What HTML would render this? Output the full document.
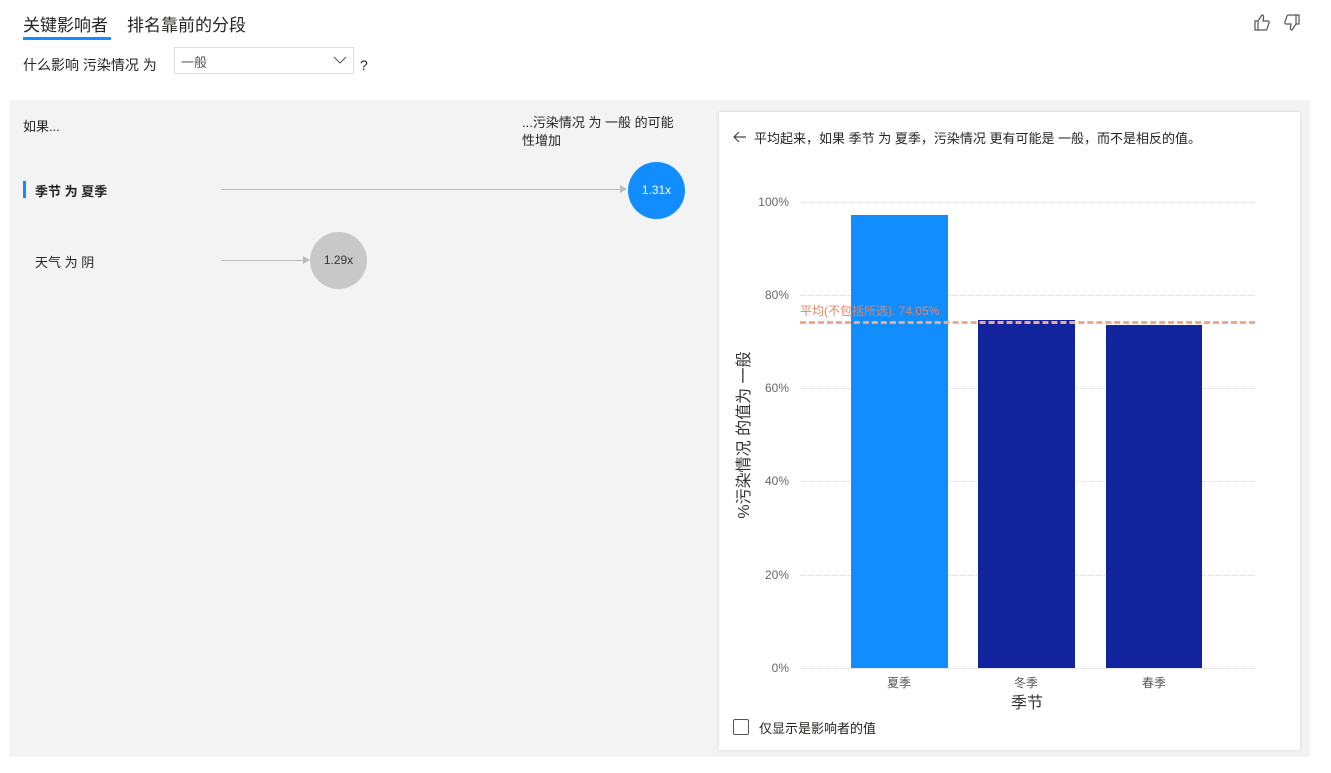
<!DOCTYPE html>
<html><head><meta charset="utf-8"><style>
body{margin:0;width:1331px;height:773px;background:#fff;font-family:"Liberation Sans","Noto Sans CJK SC",sans-serif;color:#252423;position:relative;overflow:hidden}
.a{position:absolute;white-space:nowrap}
.g{position:absolute;left:800px;width:455px;border-top:1px dotted #d8d8d8}
</style></head><body>
<div class="a" style="left:23px;top:11px;font-size:17px;color:#252423">关键影响者</div>
<div class="a" style="left:23px;top:37px;width:88px;height:3px;background:#118dff"></div>
<div class="a" style="left:127px;top:11px;font-size:17px;color:#252423">排名靠前的分段</div>
<svg class="a" style="left:1253px;top:13px" width="48" height="20" viewBox="0 0 48 20" fill="none" stroke="#555" stroke-width="1.2"><path d="M2 8h3v9H2zM5 8l4-6c1 0 2 1 1.5 3L10 8h5c1 0 1.5 1 1 2l-2 6c-.3.7-1 1-1.5 1H5"/><path d="M46 11h-3V2h3zM43 11l-4 6c-1 0-2-1-1.5-3L38 11h-5c-1 0-1.5-1-1-2l2-6c.3-.7 1-1 1.5-1H43"/></svg>
<div class="a" style="left:23px;top:55px;font-size:14px">什么影响 污染情况 为</div>
<div class="a" style="left:174px;top:47px;width:180px;height:27px;border:1px solid #ddd;box-sizing:border-box"><span class="a" style="left:6px;top:4px;font-size:13px;color:#555">一般</span><svg class="a" style="left:158px;top:8px" width="14" height="9"><path d="M1 1l6 6 6-6" fill="none" stroke="#555"/></svg></div>
<div class="a" style="left:360px;top:57px;font-size:14px">?</div>
<div class="a" style="left:9px;top:100px;width:1301px;height:657px;background:#f3f3f3"></div>
<div class="a" style="left:23px;top:116px;font-size:13px">如果...</div>
<div class="a" style="left:522px;top:114px;font-size:13px;line-height:18px">...污染情况 为 一般 的可能<br>性增加</div>
<div class="a" style="left:23px;top:181px;width:3px;height:17px;background:#118dff"></div>
<div class="a" style="left:35px;top:181px;font-size:13px;font-weight:bold">季节 为 夏季</div>
<div class="a" style="left:221px;top:189px;width:405px;height:1px;background:#bbb"></div>
<div class="a" style="left:620px;top:185px;border-left:7px solid #bbb;border-top:4px solid transparent;border-bottom:4px solid transparent"></div>
<div class="a" style="left:628px;top:162px;width:57px;height:57px;border-radius:50%;background:#118dff;color:#fff;font-size:12px;text-align:center;line-height:57px">1.31x</div>
<div class="a" style="left:35px;top:252px;font-size:13px">天气 为 阴</div>
<div class="a" style="left:221px;top:260px;width:88px;height:1px;background:#bbb"></div>
<div class="a" style="left:303px;top:256px;border-left:7px solid #bbb;border-top:4px solid transparent;border-bottom:4px solid transparent"></div>
<div class="a" style="left:310px;top:232px;width:57px;height:57px;border-radius:50%;background:#c8c8c8;color:#333;font-size:12px;text-align:center;line-height:57px">1.29x</div>
<div class="a" style="left:719px;top:112px;width:581px;height:638px;background:#fff;box-shadow:0 0 3px rgba(0,0,0,.15)"></div>
<svg class="a" style="left:733px;top:131px" width="14" height="12"><path d="M13 6H2M6 1L1 6l5 5" fill="none" stroke="#444" stroke-width="1.2"/></svg>
<div class="a" style="left:754px;top:128px;font-size:13px">平均起来，如果 季节 为 夏季，污染情况 更有可能是 一般，而不是相反的值。</div>
<div class="g" style="top:202px"></div>
<div class="g" style="top:295px"></div>
<div class="g" style="top:388px"></div>
<div class="g" style="top:481px"></div>
<div class="g" style="top:575px"></div>
<div class="g" style="top:668px"></div>
<div class="a" style="left:757px;top:195px;font-size:12px;color:#666;width:32px;text-align:right">100%</div>
<div class="a" style="left:757px;top:288px;font-size:12px;color:#666;width:32px;text-align:right">80%</div>
<div class="a" style="left:757px;top:381px;font-size:12px;color:#666;width:32px;text-align:right">60%</div>
<div class="a" style="left:757px;top:474px;font-size:12px;color:#666;width:32px;text-align:right">40%</div>
<div class="a" style="left:757px;top:568px;font-size:12px;color:#666;width:32px;text-align:right">20%</div>
<div class="a" style="left:757px;top:661px;font-size:12px;color:#666;width:32px;text-align:right">0%</div>
<div class="a" style="left:851px;top:215px;width:97px;height:453px;background:#118dff"></div>
<div class="a" style="left:978px;top:320px;width:97px;height:348px;background:#12239e"></div>
<div class="a" style="left:1106px;top:325px;width:96px;height:343px;background:#12239e"></div>
<div class="a" style="left:800px;top:321px;width:455px;border-top:3px dashed #f0a78a"></div>
<div class="a" style="left:800px;top:302px;font-size:12px;color:#e8845e">平均(不包括所选): 74.05%</div>
<div class="a" style="left:887px;top:674px;font-size:12px;color:#555">夏季</div>
<div class="a" style="left:1014px;top:674px;font-size:12px;color:#555">冬季</div>
<div class="a" style="left:1142px;top:674px;font-size:12px;color:#555">春季</div>
<div class="a" style="left:1011px;top:689px;font-size:16px;color:#333">季节</div>
<div class="a" style="left:742px;top:435px;font-size:16px;color:#333;transform:translate(-50%,-50%) rotate(-90deg)">%污染情况 的值为 一般</div>
<div class="a" style="left:733px;top:719px;width:16px;height:16px;border:1.5px solid #555;border-radius:2px;box-sizing:border-box"></div>
<div class="a" style="left:759px;top:718px;font-size:13px">仅显示是影响者的值</div>
</body></html>
